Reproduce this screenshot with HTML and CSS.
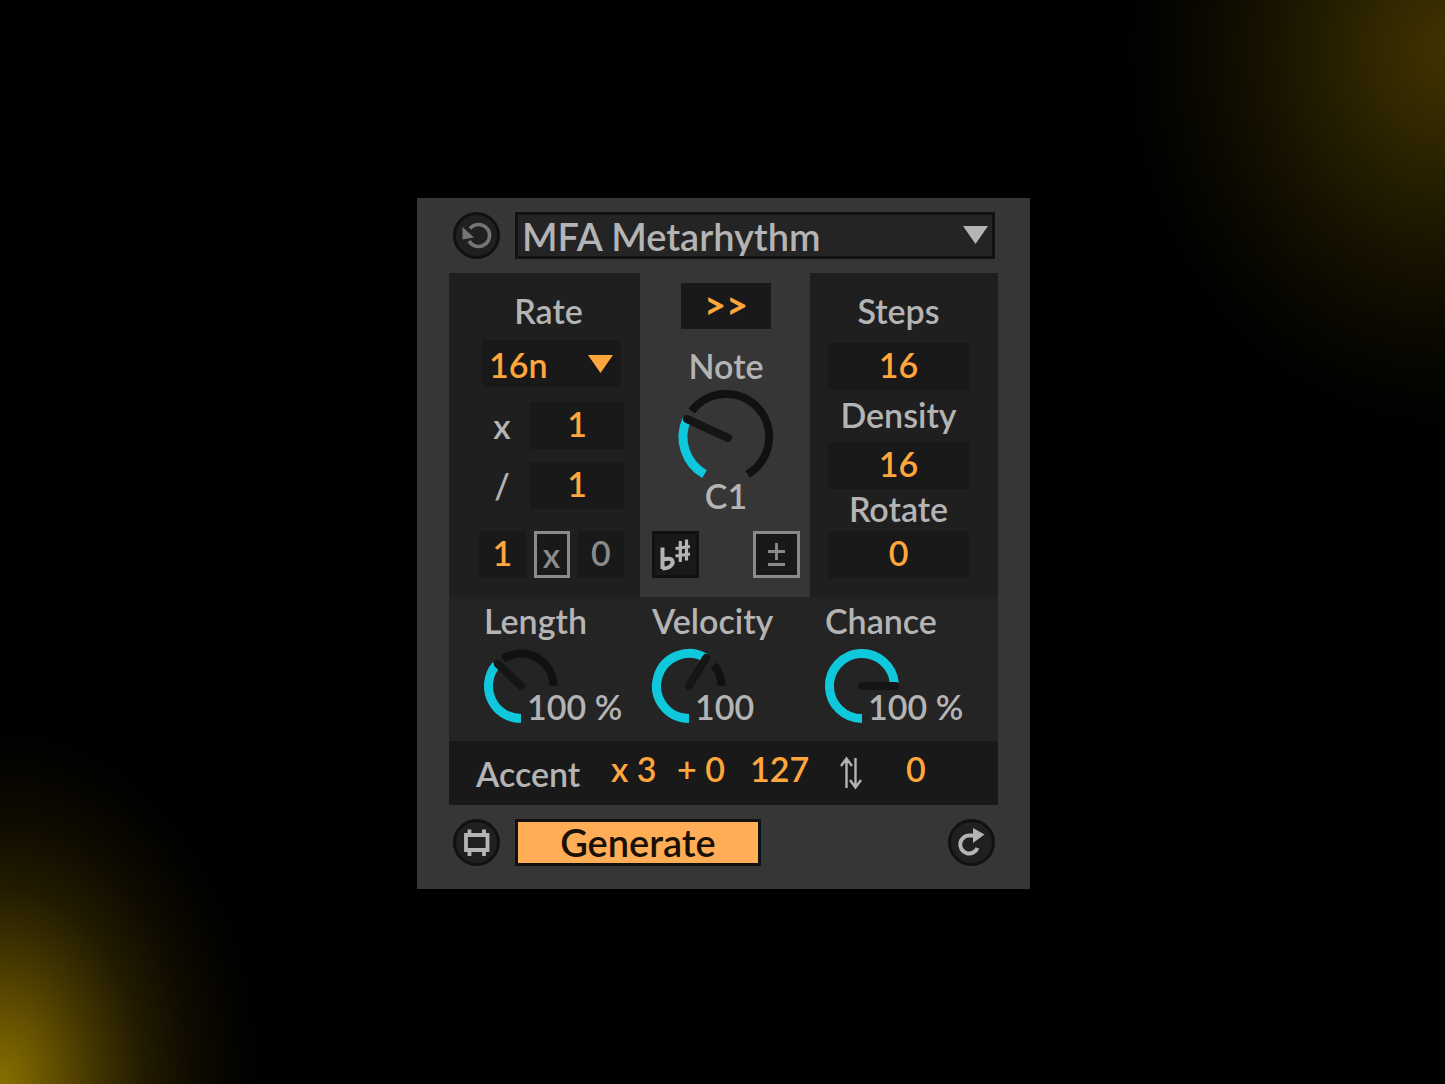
FILE: index.html
```html
<!DOCTYPE html>
<html lang="en">
<head>
<meta charset="utf-8">
<meta name="viewport" content="width=device-width, initial-scale=1">
<title>MFA Metarhythm</title>
<link rel="stylesheet" href="styles.css">
</head>
<body>
<main class="device">
  <header class="bar">
    <button class="round dim" type="button" aria-label="Reset">
      <svg viewBox="0 0 47 47"><path d="M17 16.500A11 11 0 1 1 16 29" fill="none" stroke="currentColor" stroke-width="3.600"/><path d="M9.500 15v12.500l11.500-2z" fill="currentColor"/></svg>
    </button>
    <div class="picker picker-title">
      <select aria-label="Generator"><option>MFA Metarhythm</option></select>
      <svg class="arrow" viewBox="0 0 25 18"><path d="M0 0h25L12.500 18z" fill="currentColor"/></svg>
    </div>
  </header>

  <div class="core">
    <div class="columns">
      <section class="col rate">
        <label class="name" for="rate">Rate</label>
        <div class="picker picker-rate">
          <select id="rate"><option>16n</option></select>
          <svg class="arrow" viewBox="0 0 25 18"><path d="M0 0h25L12.500 18z" fill="currentColor"/></svg>
        </div>
        <div class="pair">
          <label class="sign" for="mul">x</label>
          <input class="field" id="mul" value="1">
        </div>
        <div class="pair">
          <label class="sign" for="div">/</label>
          <input class="field" id="div" value="1">
        </div>
        <div class="trio">
          <input class="field" aria-label="Repeat" value="1">
          <button class="toggle narrow" type="button" aria-pressed="false">x</button>
          <input class="field muted" aria-label="Repeat offset" value="0">
        </div>
      </section>

      <section class="col note">
        <button class="forward" type="button">&gt;&gt;</button>
        <label class="name" for="note">Note</label>
        <div class="dial dial-large">
          <svg viewBox="-47 -47 94 86">
            <path d="M-34.300-25.900A43 43 0 1 1 21.500 37.200" class="track"/>
            <path d="M-21.500 37.200A43 43 0 0 1-39.300-17.500" class="level"/>
            <path d="M2 1L-39-18" class="needle"/>
          </svg>
          <input type="range" id="note" min="0" max="127" value="36">
        </div>
        <output class="reading" for="note">C1</output>
        <div class="ends">
          <button class="toggle solid" type="button" aria-label="Use flats and sharps">
            <svg viewBox="0 0 47 47"><g fill="none" stroke="currentColor"><path d="M10.500 16.500V38M10.500 28H14C22 26.500 22 32.500 18 35.500 15.500 37.500 13 37.500 10.500 37.500" stroke-width="4"/><path d="M28.300 10V31M34.500 8.500V29.500M23.500 17.500l14.500-2M23.500 25l14.500-2" stroke-width="3.200"/></g></svg>
          </button>
          <button class="toggle" type="button" aria-label="Bipolar">
            <svg viewBox="0 0 41 41"><path d="M12 17.500h17M20.500 9v17M12 30.500h17" fill="none" stroke="currentColor" stroke-width="2.800"/></svg>
          </button>
        </div>
      </section>

      <section class="col steps">
        <label class="name" for="steps">Steps</label>
        <input class="field" id="steps" value="16">
        <label class="name spaced" for="density">Density</label>
        <input class="field" id="density" value="16">
        <label class="name" for="rotate">Rotate</label>
        <input class="field" id="rotate" value="0">
      </section>
    </div>

    <section class="knobs">
      <div class="knob">
        <label class="name" for="length">Length</label>
        <div class="dial">
          <svg viewBox="-37 -37 74 74">
            <path d="M-18-27A32.500 32.500 0 0 1 32.500 0" class="track"/>
            <path d="M0 32.500A32.500 32.500 0 0 1-25-20.800" class="level"/>
            <path d="M0 0L-23-22" class="needle"/>
          </svg>
          <input type="range" id="length" min="0" max="300" value="100">
          <output for="length">100 %</output>
        </div>
      </div>
      <div class="knob">
        <label class="name" for="velocity">Velocity</label>
        <div class="dial">
          <svg viewBox="-37 -37 74 74">
            <path d="M24.900-20.900A32.500 32.500 0 0 1 32.500 0" class="track"/>
            <path d="M0 32.500A32.500 32.500 0 1 1 17-27.700" class="level"/>
            <path d="M0 0L17-28" class="needle"/>
          </svg>
          <input type="range" id="velocity" min="1" max="127" value="100">
          <output for="velocity">100</output>
        </div>
      </div>
      <div class="knob">
        <label class="name" for="chance">Chance</label>
        <div class="dial">
          <svg viewBox="-37 -37 74 74">
            <path d="M0 32.500A32.500 32.500 0 1 1 32.300-3" class="level"/>
            <path d="M0 0H33" class="needle"/>
          </svg>
          <input type="range" id="chance" min="0" max="100" value="100">
          <output for="chance">100 %</output>
        </div>
      </div>
    </section>

    <section class="accent">
      <label class="name" for="every">Accent</label>
      <input class="value" id="every" value="x 3">
      <input class="value" aria-label="Accent offset" value="+ 0">
      <input class="value" aria-label="Accent velocity" value="127">
      <svg class="swap" viewBox="0 0 22 32" aria-hidden="true"><path d="M6.500 31V2M1 9l5.500-7.500L12 9M15.500 1v29M10 23l5.500 7.500L21 23" fill="none" stroke="currentColor" stroke-width="2.400"/></svg>
      <input class="value" aria-label="Accent shift" value="0">
    </section>
  </div>

  <footer class="bar">
    <button class="round" type="button" aria-label="Auto apply">
      <svg viewBox="0 0 47 47"><path d="M13 16h21.500v15h-21.500zM16.500 10.500v5M31 10.500v5M16.500 31.500v5.500M31 31.500v5.500" fill="none" stroke="currentColor" stroke-width="3.800"/></svg>
    </button>
    <button class="generate" type="button">Generate</button>
    <button class="round last" type="button" aria-label="Apply">
      <svg viewBox="0 0 47 47"><path d="M26 16.500H22A9 9 0 1 0 29.500 29" fill="none" stroke="currentColor" stroke-width="4"/><path d="M25 9v15L36.500 15.500z" fill="currentColor"/></svg>
    </button>
  </footer>
</main>
</body>
</html>
```

FILE: styles.css
```css
:root {
  --panel: #363636;
  --group: #1f1f1f;
  --group-light: #242424;
  --well: #191919;
  --edge: #111;
  --text: #b4b4b4;
  --muted: #8a8a8a;
  --orange: #ffa63d;
  --cyan: #10c8dc;
}

* { box-sizing: border-box; }

body {
  margin: 0;
  min-height: 100vh;
  padding: 27px 24px 24px 26px;
  display: grid;
  place-items: center;
  background:
    radial-gradient(ellipse 330px 390px at 100% 50px, #403200, #302600 22%, #1f1a00 42%, #161100 56%, #0a0800 74%, #020200 90%, transparent),
    radial-gradient(ellipse 270px 370px at 0 100%, #887000, #5a4800 24%, #403400 36%, #221b00 53%, #0f0b00 71%, #030200 90%, transparent),
    #000;
  color: var(--text);
  font: 600 34px/40px Lato, "Open Sans", sans-serif;
}

button, input, select {
  margin: 0;
  padding: 0;
  border: 0;
  border-radius: 0;
  background: none;
  color: inherit;
  font: inherit;
}

svg {
  display: block;
  overflow: visible;
}

.device {
  width: 100%;
  max-width: 613px;
  padding: 14px 32px 23px;
  display: flex;
  flex-direction: column;
  gap: 14px;
  background: var(--panel);
}

.bar {
  display: flex;
  gap: 15px;
  padding: 0 3px 0 4px;
}

.round {
  flex: none;
  width: 47px;
  height: 47px;
  border: 3px solid var(--edge);
  border-radius: 50%;
  background: #202020;
}
.round svg { width: 47px; margin: -3px; }
.dim { color: #757575; }
.last { margin-left: auto; }

.picker {
  position: relative;
  height: 47px;
}
.picker select {
  width: 100%;
  height: 100%;
  appearance: none;
}
.picker .arrow {
  position: absolute;
  top: 15px;
  right: 8px;
  width: 25px;
  pointer-events: none;
}
.picker-title {
  flex: 1;
  border: 3px solid var(--edge);
  background: var(--group-light);
  font-size: 38px;
}
.picker-title select { padding-left: 4px; }
.picker-title .arrow { top: 11px; right: 4px; }

.core { background: var(--group-light); }

.columns {
  display: grid;
  grid-template-columns: 191fr 170fr 188fr;
}

.col {
  display: flex;
  flex-direction: column;
}
.col > .name { text-align: center; }
.rate, .steps { background: var(--group); }

.field {
  width: 100%;
  height: 47px;
  padding-bottom: 4px;
  background: var(--well);
  color: var(--orange);
  text-align: center;
}
.muted { color: var(--muted); }

.rate { padding: 18px 16px 19px 30px; }
.rate > .name { padding-right: 6px; }
.picker-rate {
  margin: 9px 3px 15px;
  background: var(--well);
  color: var(--orange);
}
.picker-rate select { padding: 3px 0 0 7px; }

.pair {
  display: grid;
  grid-template-columns: 46px 1fr;
  gap: 5px;
  margin-bottom: 13px;
}
.sign { padding-top: 4px; text-align: center; }

.trio {
  display: grid;
  grid-template-columns: 1fr 36px 1fr;
  gap: 8px;
  margin-top: 9px;
}

.toggle {
  width: 47px;
  height: 47px;
  border: 3px solid var(--muted);
  background: var(--well);
  color: var(--muted);
}
.narrow { width: 100%; }
.solid { border-color: var(--edge); color: var(--text); }
.toggle svg { width: 100%; }
.solid svg { width: 47px; margin: -3px; }

.note {
  align-items: center;
  padding: 10px 10px 19px 12px;
  background: var(--panel);
}
.forward {
  width: 90px;
  height: 46px;
  padding-bottom: 4px;
  margin-bottom: 17px;
  background: var(--well);
  color: var(--orange);
  font-size: 38px;
  font-weight: 700;
}
.ends {
  width: 100%;
  display: flex;
  justify-content: space-between;
  margin-top: auto;
}

.dial {
  position: relative;
  width: 74px;
  height: 74px;
}
.dial-large {
  width: 94px;
  height: 86px;
  margin-top: 4px;
}
.dial input {
  position: absolute;
  inset: 0;
  width: 100%;
  height: 100%;
  opacity: 0;
}
.dial output {
  position: absolute;
  left: 43px;
  top: 38px;
  white-space: nowrap;
}
.track, .level, .needle { fill: none; stroke-width: 8px; }
.track { stroke: var(--edge); }
.level { stroke: var(--cyan); stroke-width: 9px; }
.needle { stroke: #151515; stroke-linecap: round; }

.steps { padding: 18px 29px 19px 18px; }
.steps .name { margin-bottom: 2px; }
.steps .name:first-child { margin-bottom: 12px; }
.steps .spaced { margin: 5px 0 7px; }

.knobs {
  display: grid;
  grid-template-columns: 168fr 173fr 173fr;
  padding: 4px 0 18px 35px;
}
.knob .name { display: block; margin-bottom: 8px; }

.accent {
  display: grid;
  grid-template-columns: 135fr 66fr 73fr 90fr 66fr 92fr;
  align-items: center;
  height: 64px;
  padding-left: 27px;
  background: var(--well);
}
.accent .name { padding-top: 2px; }
.value {
  width: 100%;
  padding-bottom: 8px;
  color: var(--orange);
}
.swap { width: 22px; }

.generate {
  width: 246px;
  height: 47px;
  padding-bottom: 2px;
  border: 3px solid var(--edge);
  background: #ffad56;
  color: #191008;
  font-size: 38px;
}
```
